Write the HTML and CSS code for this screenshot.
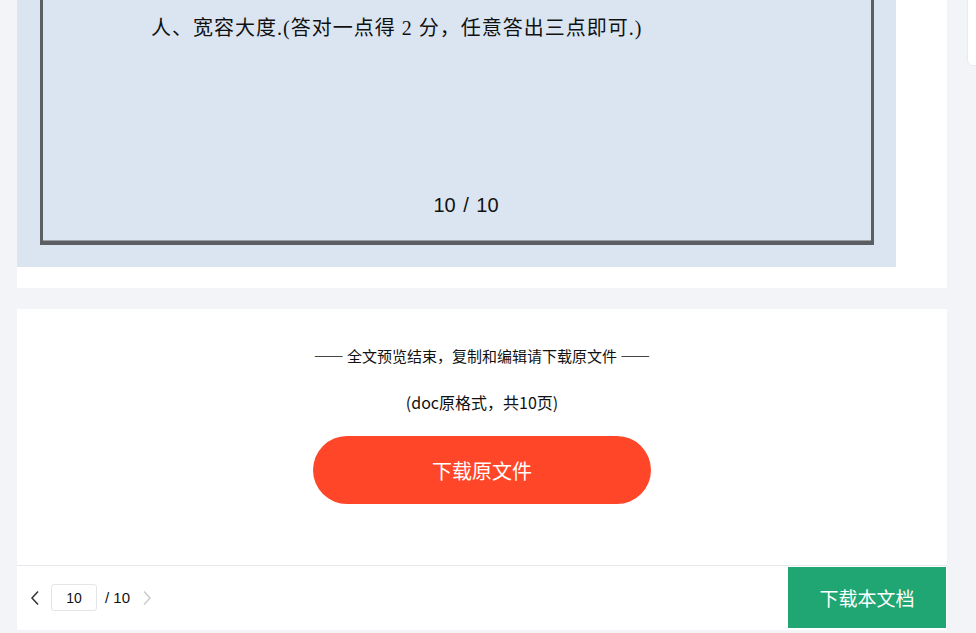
FILE: index.html
```html
<!DOCTYPE html>
<html lang="zh-CN">
<head>
<meta charset="utf-8">
<title>文档预览</title>
<link rel="stylesheet" href="styles.css">
</head>
<body>
<div class="side-widget"></div>
<div class="wrap">
  <div class="card preview">
    <div class="doc-page">
      <div class="doc-frame">
        <p class="doc-text">人、宽容大度.(答对一点得 2 分，任意答出三点即可.)</p>
        <div class="doc-num">10 / 10</div>
      </div>
    </div>
  </div>

  <div class="card finish">
    <div class="finish-tip">—— 全文预览结束，复制和编辑请下载原文件 ——</div>
    <div class="finish-info">(doc原格式，共10页)</div>
    <a class="btn-orange" href="#">下载原文件</a>

    <div class="pager-bar">
      <div class="pager">
        <span class="arrow">
          <svg width="10" height="16" viewBox="0 0 10 16"><polyline points="8,1.5 2,8 8,14.5" fill="none" stroke="#333" stroke-width="1.5"/></svg>
        </span>
        <input class="page-input" type="text" value="10">
        <span class="page-total">/ 10</span>
        <span class="arrow off">
          <svg width="10" height="16" viewBox="0 0 10 16"><polyline points="2,1.5 8,8 2,14.5" fill="none" stroke="#ccc" stroke-width="1.5"/></svg>
        </span>
      </div>
      <a class="btn-green" href="#">下载本文档</a>
    </div>
  </div>
</div>
</body>
</html>
```

FILE: styles.css
```css
* { margin: 0; padding: 0; box-sizing: border-box; }
html, body { height: 100%; overflow: hidden; }
body { background: #f3f4f8; font-family: "Noto Sans CJK SC", "Liberation Sans", sans-serif; color: #222; }
a { text-decoration: none; }

.wrap { width: 930px; margin-left: 17px; }
.card { background: #fff; }

/* document preview */
.preview { padding-bottom: 21px; }
.doc-page { width: 879px; background: #dbe5f1; padding: 0 22px 22px 23px; }
.doc-frame { height: 245px; border: 3px solid #5b5f63; border-top: none; border-bottom-width: 4px; box-shadow: inset 0 -1px 0 #9a9da1; display: flex; flex-direction: column; }
.doc-text { font-family: "Liberation Serif", "Noto Sans CJK SC", serif; font-size: 20px; line-height: 30px; letter-spacing: 1px; padding: 13px 0 0 108px; color: #111; }
.doc-num { margin-top: auto; padding: 0 0 21px 18px; text-align: center; font-family: "Liberation Sans", sans-serif; font-size: 20px; line-height: 30px; word-spacing: 2px; color: #111; }

/* end of preview */
.finish { margin-top: 21px; padding-top: 36px; display: flex; flex-direction: column; align-items: center; }
.finish-tip { font-size: 15px; line-height: 22px; color: #111; }
.finish-info { margin-top: 23px; font-size: 16px; line-height: 24px; color: #111; }
.btn-orange { margin-top: 22px; width: 338px; height: 68px; border-radius: 34px; background: #ff4628; color: #fff; font-size: 20px; display: flex; align-items: center; justify-content: center; }

.pager-bar { margin-top: 61px; width: 100%; border-top: 1px solid #e6e8eb; padding: 1px 1px 2px 0; display: flex; justify-content: space-between; align-items: center; }
.pager { display: flex; align-items: center; padding-left: 13px; }
.arrow { display: flex; width: 10px; height: 16px; }
.page-input { width: 46px; height: 27px; margin-left: 11px; border: 1px solid #e3e5e8; border-radius: 3px; text-align: center; font-family: "Liberation Sans", sans-serif; font-size: 14px; color: #111; outline: none; }
.page-total { margin: 0 12px 0 8px; font-family: "Liberation Sans", sans-serif; font-size: 15px; color: #111; }
.btn-green { width: 158px; height: 61px; background: #1fa673; color: #fff; font-size: 19px; display: flex; align-items: center; justify-content: center; }

/* floating side widget, cut by the window edge */
.side-widget { position: absolute; left: 967px; top: -10px; width: 30px; height: 76px; background: #fff; border: 1px solid #e9eaee; border-radius: 6px; }
```
